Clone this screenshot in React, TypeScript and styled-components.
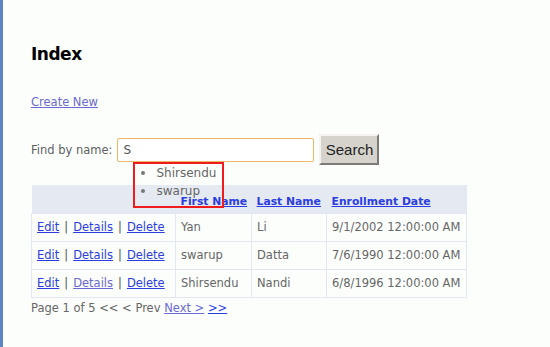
import styled, { createGlobalStyle } from "styled-components"

const GlobalStyle = createGlobalStyle`
  html, body {
    margin: 0;
    padding: 0;
    background: #fcfefc;
  }
  body {
    font-family: "DejaVu Sans", Verdana, sans-serif;
    font-size: 11.5px;
    color: #5f5f5f;
  }
`

const Page = styled.div`
  min-height: 347px;
  box-sizing: border-box;
  border-left: 3px solid #5b86c1;
  padding: 44px 0 0 28px;
  display: flex;
  flex-direction: column;
  align-items: flex-start;
`

const Title = styled.h2`
  margin: 0;
  font-family: "DejaVu Sans", Verdana, sans-serif;
  font-size: 17px;
  font-weight: bold;
  color: #000;
  letter-spacing: -0.5px;
`

const Link = styled.a<{ $visited?: boolean; $bold?: boolean }>`
  color: ${(p) => (p.$visited ? "#6a6ad2" : "#2b3de2")};
  text-decoration: underline;
  font-weight: ${(p) => (p.$bold ? "bold" : "normal")};
  cursor: pointer;
`

const CreateLink = styled(Link)`
  margin-top: 31px;
`

const SearchRow = styled.form`
  margin-top: 25px;
  display: flex;
  align-items: center;
  gap: 5px;
`

const Label = styled.label`
  color: #5f5f5f;
`

const InputWrap = styled.div`
  position: relative;
`

const Input = styled.input`
  box-sizing: border-box;
  width: 197px;
  height: 24px;
  margin: 0;
  padding: 0 5px;
  border: 1px solid #e9b765;
  border-radius: 2px;
  background: #fff;
  font-family: "DejaVu Sans", Verdana, sans-serif;
  font-size: 12px;
  color: #555;
  outline: none;
`

const Suggestions = styled.ul`
  position: absolute;
  left: 16px;
  top: 24px;
  z-index: 3;
  width: 91px;
  height: 46px;
  box-sizing: border-box;
  margin: 0;
  padding: 0 0 0 21px;
  border: 2px solid #ee1c1c;
  list-style: disc;
  color: #666;
  font-size: 12px;
  line-height: 18px;
  li::marker {
    color: #777;
    font-size: 13px;
  }
`

const Button = styled.button`
  box-sizing: border-box;
  width: 60px;
  height: 31px;
  padding: 0;
  background: #d6d3cc;
  border: 2px solid;
  border-color: #f4f3f0 #7c7b78 #7c7b78 #f4f3f0;
  font-family: "Liberation Sans", Arial, sans-serif;
  font-size: 15px;
  color: #222;
`

const Table = styled.table`
  margin-top: 20px;
  width: 435px;
  border-collapse: collapse;
  table-layout: fixed;
`

const HeadCell = styled.th<{ $width: number }>`
  width: ${(p) => p.$width}px;
  height: 28px;
  padding: 6px 5px 0;
  box-sizing: border-box;
  text-align: left;
  background: #e5eaf2;
  border-bottom: 1px solid #e3e7f3;
  white-space: nowrap;
  font-size: 10.8px;
`

const Cell = styled.td`
  height: 27px;
  padding: 0 5px;
  border: 1px solid #e3e7f3;
  white-space: nowrap;
  color: #666;
`

const Sep = styled.span`
  margin: 0 5px;
  color: #555;
`

const Pager = styled.div`
  margin-top: 3px;
  color: #666;
`

const students = [
  { first: "Yan", last: "Li", date: "9/1/2002 12:00:00 AM", visited: false },
  { first: "swarup", last: "Datta", date: "7/6/1990 12:00:00 AM", visited: false },
  { first: "Shirsendu", last: "Nandi", date: "6/8/1996 12:00:00 AM", visited: true },
]

export default function App() {
  return (
    <>
      <GlobalStyle />
      <Page>
        <Title>Index</Title>
        <CreateLink $visited>Create New</CreateLink>
        <SearchRow onSubmit={(e) => e.preventDefault()}>
          <Label>Find by name:</Label>
          <InputWrap>
            <Input defaultValue="S" />
            <Suggestions>
              <li>Shirsendu</li>
              <li>swarup</li>
            </Suggestions>
          </InputWrap>
          <Button type="submit">Search</Button>
        </SearchRow>
        <Table>
          <thead>
            <tr>
              <HeadCell $width={144}></HeadCell>
              <HeadCell $width={76}><Link $bold>First Name</Link></HeadCell>
              <HeadCell $width={75}><Link $bold>Last Name</Link></HeadCell>
              <HeadCell $width={140}><Link $bold>Enrollment Date</Link></HeadCell>
            </tr>
          </thead>
          <tbody>
            {students.map((s) => (
              <tr key={s.first}>
                <Cell>
                  <Link>Edit</Link><Sep>|</Sep>
                  <Link $visited={s.visited}>Details</Link><Sep>|</Sep>
                  <Link>Delete</Link>
                </Cell>
                <Cell>{s.first}</Cell>
                <Cell>{s.last}</Cell>
                <Cell>{s.date}</Cell>
              </tr>
            ))}
          </tbody>
        </Table>
        <Pager>
          Page 1 of 5 &lt;&lt; &lt; Prev <Link $visited>Next &gt;</Link> <Link>&gt;&gt;</Link>
        </Pager>
      </Page>
    </>
  )
}
